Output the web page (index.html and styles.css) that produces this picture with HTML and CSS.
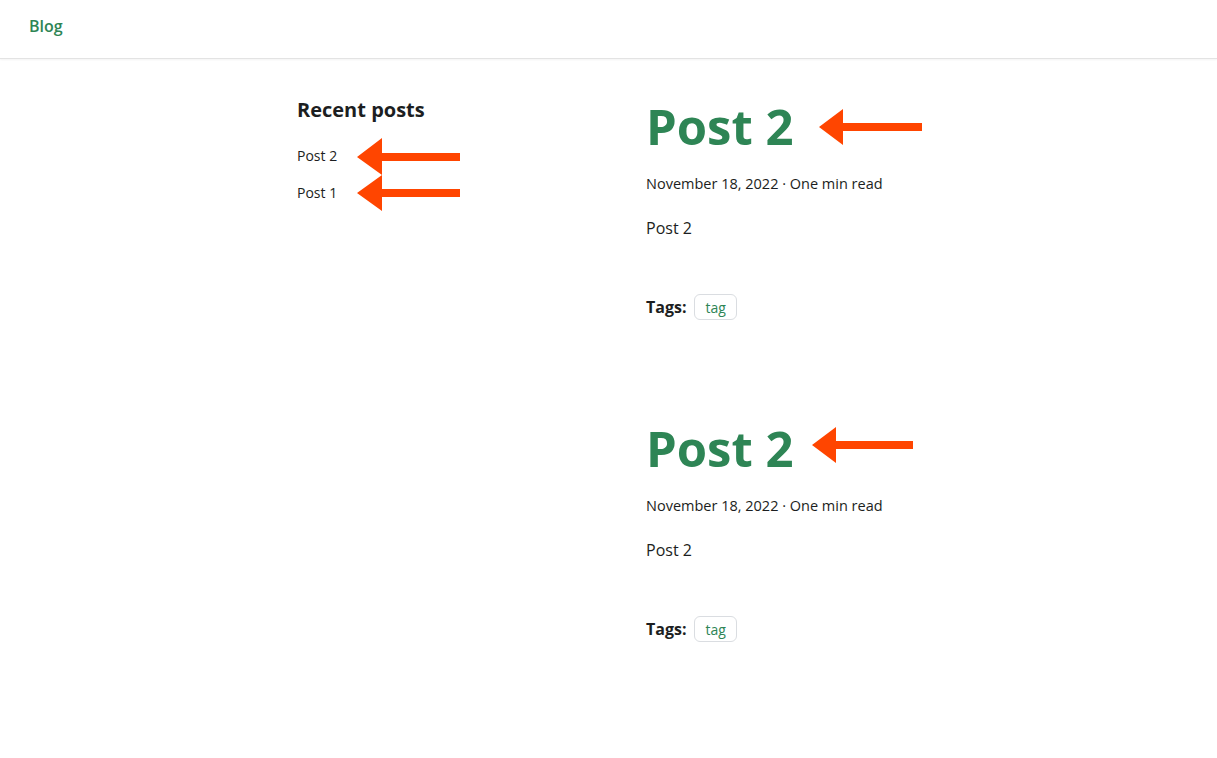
FILE: index.html
```html
<!DOCTYPE html>
<html lang="en">
<head>
<meta charset="utf-8">
<title>Blog</title>
<link rel="stylesheet" href="styles.css">
</head>
<body>
<header class="navbar">
  <a class="navbar-link" href="#">Blog</a>
</header>
<div class="page">
  <aside class="sidebar">
    <div class="sidebar-title">Recent posts</div>
    <ul class="sidebar-list">
      <li><a href="#">Post 2</a></li>
      <li><a href="#">Post 1</a></li>
    </ul>
  </aside>
  <main class="posts">
    <article class="post">
      <h2 class="post-title">Post 2</h2>
      <div class="post-meta">November 18, 2022 · One min read</div>
      <p class="post-body">Post 2</p>
      <div class="post-tags"><b>Tags:</b><a class="tag" href="#">tag</a></div>
    </article>
    <article class="post">
      <h2 class="post-title">Post 2</h2>
      <div class="post-meta">November 18, 2022 · One min read</div>
      <p class="post-body">Post 2</p>
      <div class="post-tags"><b>Tags:</b><a class="tag" href="#">tag</a></div>
    </article>
  </main>
</div>
<svg class="annotations" width="1217" height="758" viewBox="0 0 1217 758" aria-hidden="true">
  <g fill="#ff4500">
    <polygon points="357,157 382,138 382,153 460,153 460,161 382,161 382,175"/>
    <polygon points="357,193 382,175 382,189 460,189 460,197 382,197 382,211"/>
    <polygon points="819,127 843,109 843,123 922,123 922,131 843,131 843,145"/>
    <polygon points="812,445 836,427 836,441 913,441 913,449 836,449 836,463"/>
  </g>
</svg>
</body>
</html>
```
FILE: styles.css
```css
* { box-sizing: border-box; }
html, body { margin: 0; padding: 0; }
body {
  font-family: "Open Sans", "Noto Sans", sans-serif;
  color: #1c1e21;
  background: #fff;
  position: relative;
  min-height: 758px;
}
a { text-decoration: none; }

.navbar {
  height: 59px;
  border-bottom: 1px solid #e3e3e3;
  box-shadow: 0 1px 2px rgba(0,0,0,0.05);
  display: flex;
  align-items: center;
  padding-left: 29px;
  padding-bottom: 6px;
}
.navbar-link {
  color: #2e8555;
  font-weight: 600;
  font-size: 16px;
}

.page {
  display: grid;
  grid-template-columns: 349px 340px;
  margin-left: 297px;
  padding-top: 38px;
}

.sidebar-title {
  font-size: 20px;
  font-weight: 700;
  line-height: 25px;
  margin-bottom: 22px;
}
.sidebar-list {
  list-style: none;
  margin: 0;
  padding: 0;
  display: flex;
  flex-direction: column;
  gap: 15px;
}
.sidebar-list a {
  color: #1c1e21;
  font-size: 14px;
  line-height: 20px;
}

.post { margin-bottom: 99px; }
.post-title {
  margin: -1px 0 0;
  color: #2e8555;
  font-size: 49px;
  font-weight: 700;
  line-height: 60px;
}
.post-meta {
  margin-top: 18px;
  font-size: 14.5px;
  line-height: 20px;
}
.post-body {
  margin: 24px 0 0;
  font-size: 16px;
  line-height: 20px;
}
.post-tags {
  margin-top: 56px;
  display: flex;
  align-items: center;
  gap: 8px;
  font-size: 16px;
}
.tag {
  color: #2e8555;
  font-size: 14px;
  border: 1px solid #dadde1;
  border-radius: 6px;
  height: 26px;
  padding: 0 10px;
  display: inline-flex;
  align-items: center;
}

.annotations {
  position: absolute;
  top: 0;
  left: 0;
  pointer-events: none;
}
```
